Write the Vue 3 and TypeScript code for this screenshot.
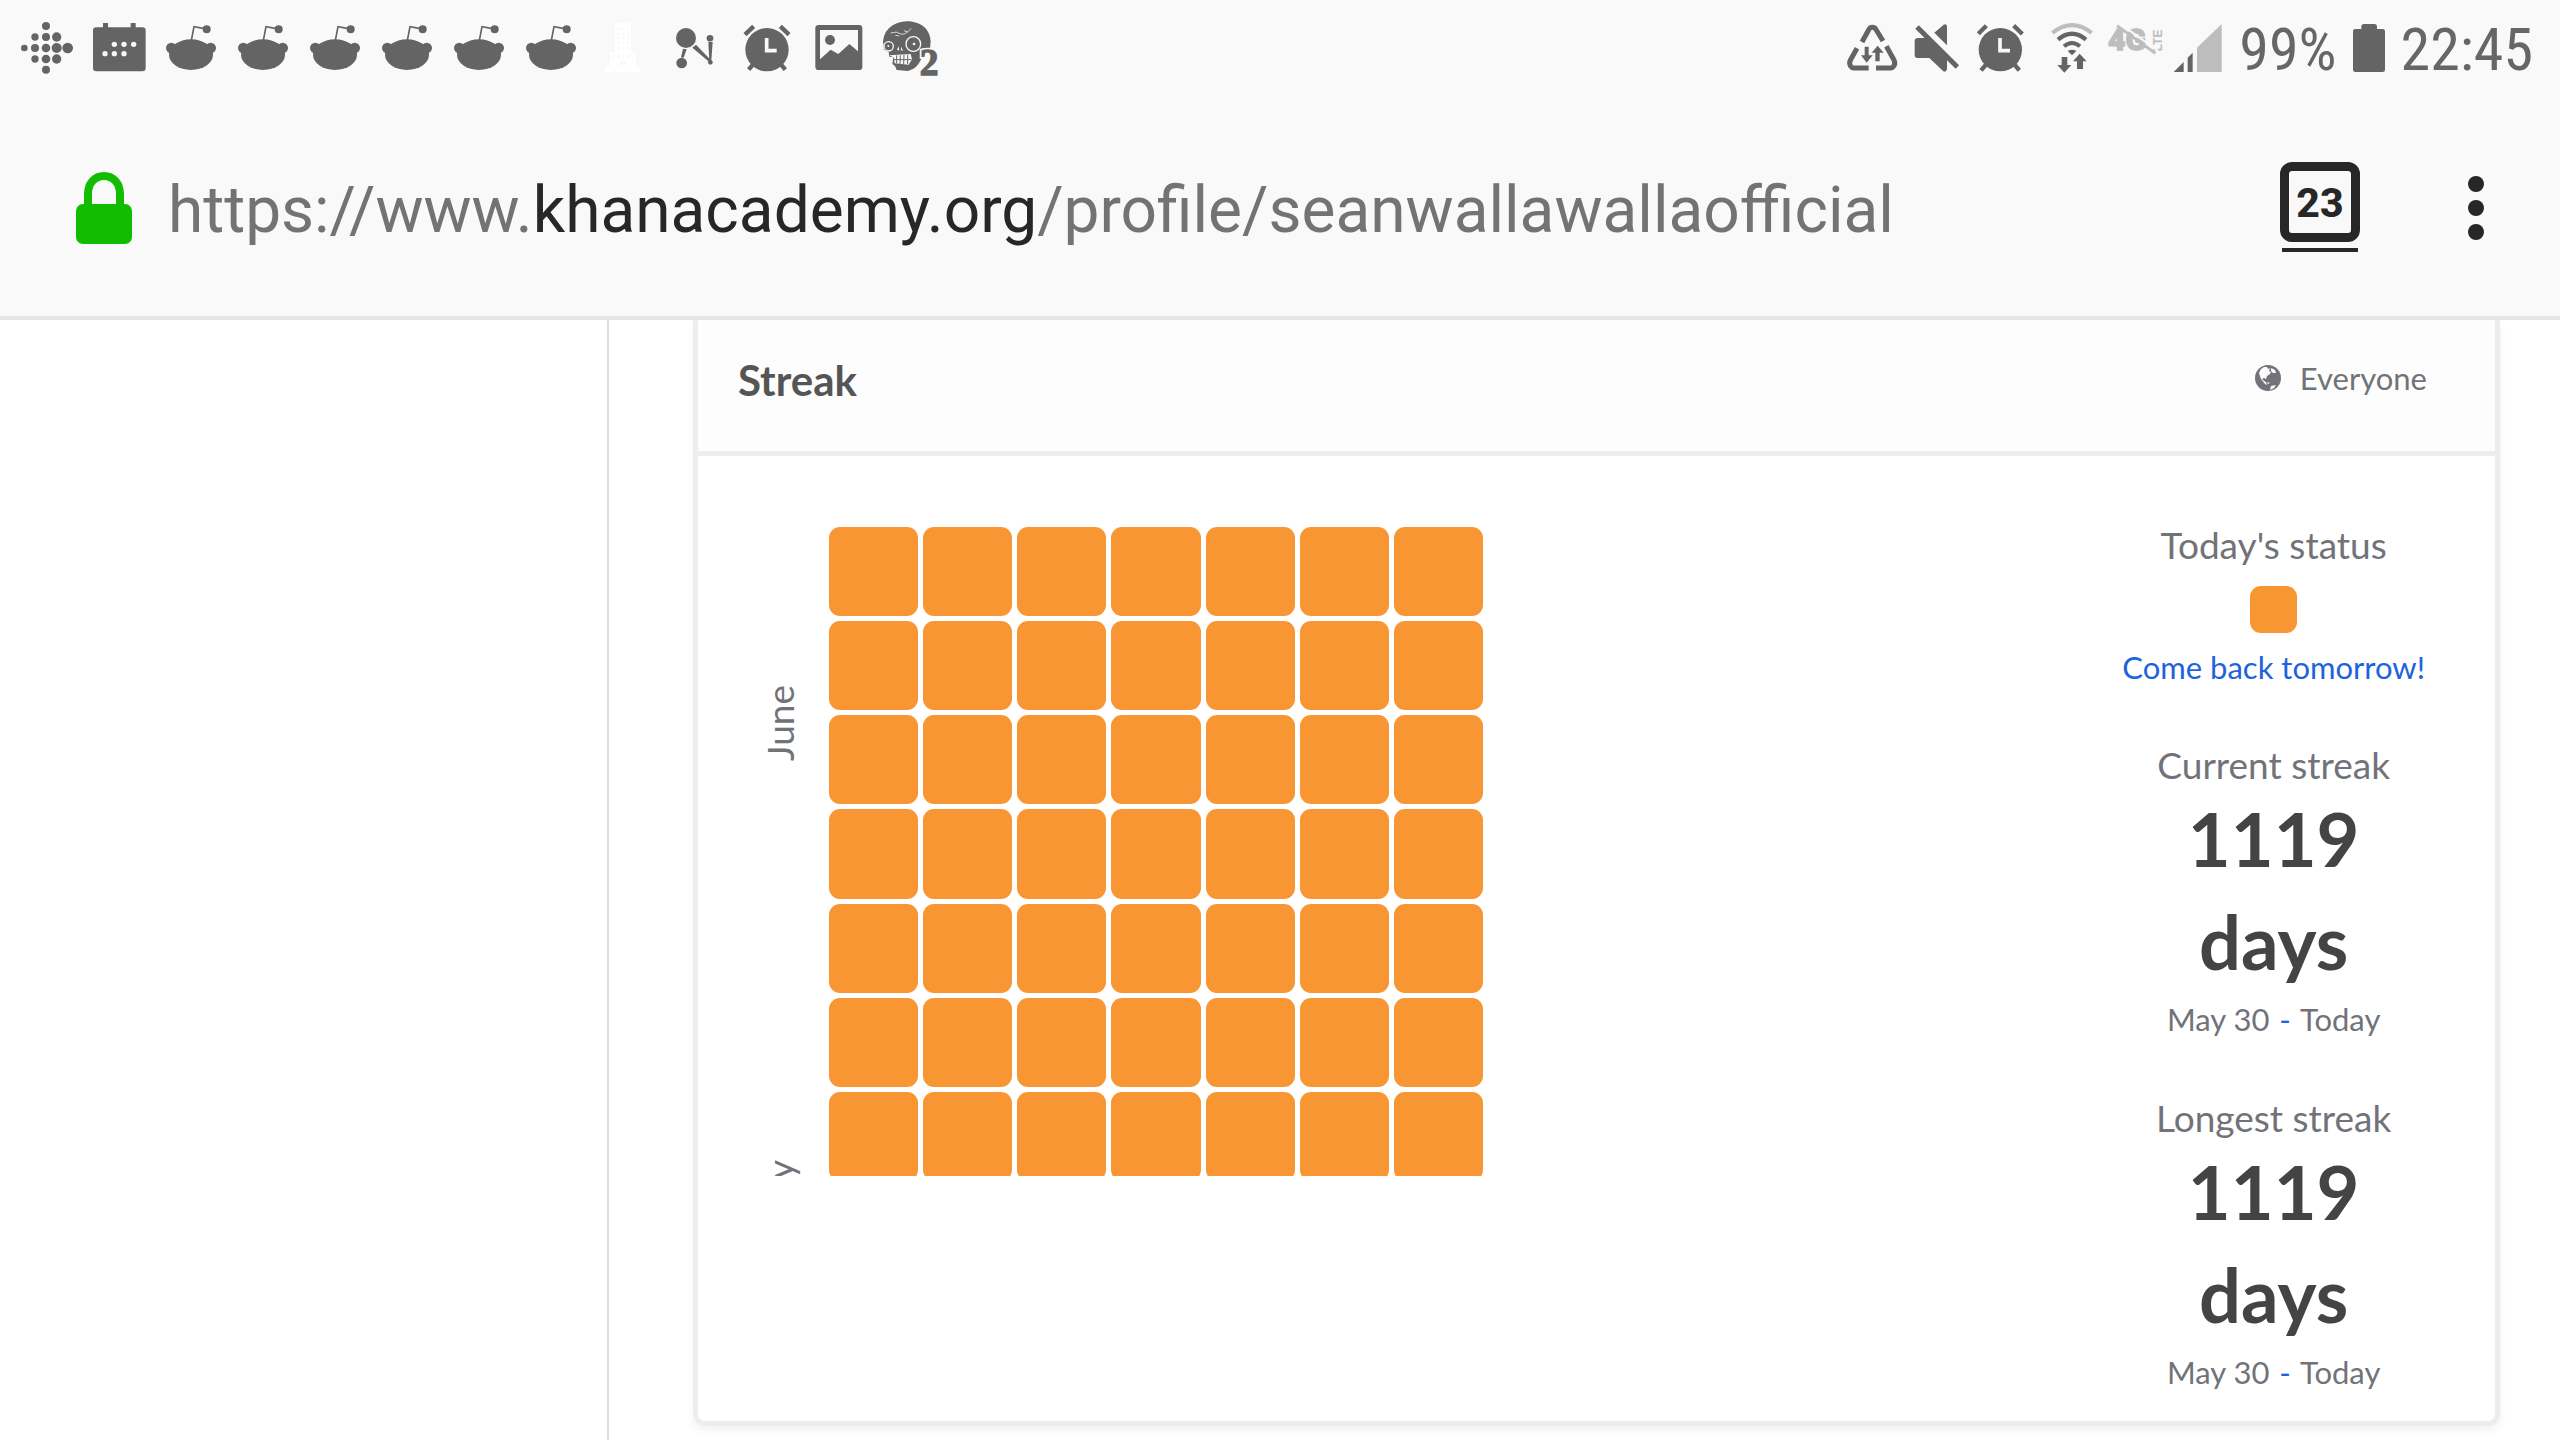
<script setup lang="ts">
interface Streak {
  label: string
  count: number
  from: string
  to: string
}

const redditNotifications = 6
const weeks = 7
const daysPerWeek = 7

const months = [
  { name: 'June', size: 'short' },
  { name: 'May', size: 'long' },
]

const streaks: Streak[] = [
  { label: 'Current streak', count: 1119, from: 'May 30', to: 'Today' },
  { label: 'Longest streak', count: 1119, from: 'May 30', to: 'Today' },
]

const fitbitDots = [
  [73, 144, 10], [105, 111, 11], [105, 144, 12], [105, 177, 11],
  [138, 78, 12], [138, 111, 12], [138, 144, 13], [138, 177, 13], [138, 209, 12],
  [170, 111, 14], [170, 144, 15], [170, 177, 14], [203, 144, 16],
]
const calendarDots = [[343, 133], [372, 133], [401, 133], [315, 161], [343, 161], [372, 161]]
</script>

<template>
  <div class="screen">
    <header class="chrome">
      <div class="status-bar">
        <div class="notifications">
          <svg class="note" viewBox="33 0 216 300">
            <circle v-for="(d, i) in fitbitDots" :key="i" :cx="d[0]" :cy="d[1]" :r="d[2]" />
          </svg>
          <svg class="note" viewBox="249 0 216 300">
            <rect x="279" y="82" width="158" height="132" rx="10" />
            <rect x="309" y="69" width="15" height="16" />
            <rect x="392" y="69" width="15" height="16" />
            <circle v-for="(d, i) in calendarDots" :key="i" class="paper" :cx="d[0]" :cy="d[1]" r="8" />
          </svg>
          <svg v-for="n in redditNotifications" :key="n" class="note" viewBox="465 0 216 300">
            <ellipse cx="573" cy="164" rx="66" ry="46" />
            <circle cx="514" cy="144" r="16" />
            <circle cx="632" cy="144" r="16" />
            <path class="line" d="M574 122 L582 80 L614 86" stroke-width="5" />
            <circle cx="620" cy="88" r="12" />
          </svg>
          <svg class="note" viewBox="321 0 216 300">
            <path fill="#fff" d="M404 70H453V155H468V197H481V217H376V197H390V155H404Z" />
            <path
              class="paper"
              d="M411 84h7v7h-7zM426 84h7v7h-7zM441 84h6v7h-6zM411 98h7v7h-7zM426 98h7v7h-7zM441 98h6v7h-6zM411 112h7v7h-7zM426 112h7v7h-7zM441 112h6v7h-6zM411 126h7v7h-7zM426 126h7v7h-7zM441 126h6v7h-6zM411 140h7v7h-7zM426 140h7v7h-7zM441 140h6v7h-6zM397 163h7v11h-7zM411 163h7v11h-7zM426 163h7v11h-7zM441 163h6v11h-6zM454 163h6v11h-6zM419 183h20v12h-20z"
            />
          </svg>
          <svg class="note" viewBox="537 0 216 300">
            <circle cx="618" cy="114" r="30" />
            <circle cx="690" cy="115" r="10" />
            <circle cx="605" cy="189" r="16" />
            <circle cx="691" cy="187" r="7" />
            <path d="M609 146L620 148L611 173L603 172ZM637 143L648 134L693 181L688 186ZM685 126L698 126L694 182L688 182Z" />
          </svg>
          <svg class="note" viewBox="425 0 216 300">
            <circle cx="533" cy="149" r="65" />
            <path class="line" d="M467 104L493 79M573 79L599 104" stroke-width="13" />
            <path class="line" d="M478 209L494 190M588 209L572 190" stroke-width="13" />
            <path class="hand" d="M532 114V152H562" />
          </svg>
          <svg class="note" viewBox="969 0 216 300">
            <rect x="1006" y="75" width="141" height="135" rx="10" />
            <path class="paper" d="M1020 90H1134V154L1108 132L1075 162L1052 149L1020 178Z" />
            <circle cx="1050" cy="120" r="15" />
          </svg>
          <svg class="note" viewBox="1185 0 216 300">
            <path d="M1209 124Q1212 92 1238 76Q1262 62 1290 64Q1348 72 1352 124L1350 146Q1328 152 1324 176Q1312 206 1284 213L1250 210L1245 198L1237 192L1240 172L1228 170L1226 156L1212 150Z" />
            <path d="M1232 99Q1250 92 1262 102Q1276 106 1294 85M1246 106L1258 108M1272 92L1284 96" fill="none" stroke="#d5d5d5" stroke-width="3" />
            <g fill="#646464" stroke="#f9f9f9" stroke-width="4">
              <circle cx="1226" cy="139" r="14" />
              <circle cx="1300" cy="132" r="22" />
            </g>
            <circle cx="1225" cy="138" r="3" class="paper" />
            <circle cx="1302" cy="132" r="4" class="paper" />
            <path class="paper" d="M1251 150L1256 139L1258 151ZM1263 140L1269 152L1263 151ZM1228 166L1292 162L1296 178L1286 194L1244 190L1242 173Z" />
            <path class="line" d="M1250 166V190M1261 166L1260 192M1272 165L1271 193M1283 164V192M1242 179H1294" stroke-width="3" />
            <text class="badge-halo" x="1319" y="224">2</text>
            <text class="badge" x="1319" y="224">2</text>
          </svg>
        </div>

        <div class="indicators">
          <svg class="recycle" viewBox="49 0 198 300">
            <path class="line" stroke-width="15" d="M118 126L139 88Q142 82 149 82Q156 82 159 87L181 123M103 145L83 181Q78 190 84 199Q87 204 93 204H138M191 139L214 180Q219 190 213 199Q210 204 204 204H160" />
            <path d="M126 140H138V166H150L132 188L115 166H126ZM158 184H171V158H183L165 137L147 158H158Z" />
          </svg>
          <svg class="mute" viewBox="247 0 189 300">
            <path d="M276 124Q276 114 286 114H308L373 178V208Q370 218 362 214L320 174H286Q276 174 276 164ZM335 98L363 74Q373 70 373 82V136Z" />
            <path class="line" stroke-width="15" d="M283 81L404 201" />
          </svg>
          <svg class="alarm" viewBox="436 0 198 300">
            <circle cx="533" cy="149" r="65" />
            <path class="line" d="M467 101L491 77M573 77L599 102" stroke-width="13" />
            <path class="line" d="M475 211L492 192M590 211L574 192" stroke-width="13" />
            <path class="hand" d="M532 114V152H562" />
          </svg>
          <svg class="wifi" viewBox="634 0 204 300">
            <path class="line faint" stroke-width="12" d="M689 99Q748 52 807 99" />
            <path class="line" stroke-width="13" d="M706 119Q748 84 790 119" />
            <path class="line" stroke-width="12" d="M724 139Q748 119 772 139" />
            <path d="M735 153Q748 145 761 153L748 166Z" />
            <path d="M717 171H734V195H746L725 218L704 195H717ZM763 207H781V184H792L771 161L751 184H763Z" />
          </svg>
          <svg class="lte" viewBox="838 0 198 300">
            <text class="four-g" x="856" y="151">4G</text>
            <text class="lte-text" transform="translate(1017 154) rotate(-90)">LTE</text>
            <path d="M890 70L1006 152" fill="none" stroke="#f9f9f9" stroke-width="6" />
            <path class="line faint" d="M883 77L998 160" stroke-width="8" />
          </svg>
          <svg class="signal" viewBox="1036 0 162 300">
            <path d="M1053 216L1083 186V216ZM1095 173L1110 158V216H1095Z" />
            <path class="faint-fill" d="M1123 143L1197 72V216H1123Z" />
          </svg>
          <span class="percent">99%</span>
          <svg class="battery" viewBox="573 0 96 300">
            <path d="M598 87V80Q598 72 606 72H637Q645 72 645 80V87H662Q669 87 669 94V209Q669 216 662 216H580Q573 216 573 209V94Q573 87 580 87Z" />
          </svg>
          <time class="clock">22:45</time>
        </div>
      </div>

      <div class="toolbar">
        <svg class="lock" viewBox="0 0 56 72">
          <path d="M12 36V22C12 11 19 4 28 4S44 11 44 22V36" fill="none" stroke="#12bc00" stroke-width="8" />
          <rect y="32" width="56" height="40" rx="7" fill="#12bc00" />
        </svg>
        <button class="url" type="button" aria-label="Edit address">https://www.<span class="domain">khanacademy.org</span>/profile/seanwallawallaofficial</button>
        <button class="tabs" type="button" aria-label="Open tabs"><span class="tab-count">23</span></button>
        <button class="menu" type="button" aria-label="Menu"><i></i><i></i><i></i></button>
      </div>
    </header>

    <div class="page">
      <aside class="sidebar"></aside>
      <main class="content">
        <section class="card">
          <div class="card-head">
            <h2>Streak</h2>
            <div class="visibility">
              <svg class="globe" viewBox="0 0 27 27">
                <circle cx="13" cy="13" r="13" fill="#717379" />
                <path fill="#fdfdfd" d="M4 8L6 4L9 2L12 2L13 4L15 3L14 6L16 7L15 9L12 11L11 14L9 13L7 14L9 16L11 17L12 20L10 19L6 14ZM16 3L20 5L21 8L18 8L16 6ZM12 17L15 18L13 19ZM16 21L21 20L19 23L15 25Z" />
              </svg>
              <span>Everyone</span>
            </div>
          </div>
          <div class="card-body">
            <div class="calendar">
              <div class="months">
                <div v-for="m in months" :key="m.name" class="month" :class="m.size">
                  <span>{{ m.name }}</span>
                </div>
              </div>
              <div class="days">
                <span v-for="d in weeks * daysPerWeek" :key="d" class="day"></span>
              </div>
            </div>
            <div class="stats">
              <div class="stat today">
                <div class="label">Today's status</div>
                <span class="swatch"></span>
                <a class="hint" href="#">Come back tomorrow!</a>
              </div>
              <div v-for="s in streaks" :key="s.label" class="stat">
                <div class="label">{{ s.label }}</div>
                <div class="count"><span>{{ s.count }}</span><span>days</span></div>
                <div class="range">{{ s.from }} <span class="dash">-</span> {{ s.to }}</div>
              </div>
            </div>
          </div>
        </section>
      </main>
    </div>
  </div>
</template>

<style>
body {
  margin: 0;
  background: #fff;
}
</style>

<style scoped>
.screen {
  display: flex;
  flex-direction: column;
  min-height: 100vh;
  font-family: Lato, sans-serif;
}
.chrome {
  background: #f9f9f9;
  border-bottom: 4px solid #e6e6e6;
  font-family: Roboto, sans-serif;
}
.status-bar {
  display: flex;
  justify-content: space-between;
  height: 100px;
  padding: 0 27px 0 11px;
  color: #666;
  fill: #646464;
}
.notifications,
.indicators {
  display: flex;
  align-items: flex-start;
}
.status-bar svg {
  display: block;
  height: 100px;
}
.note { width: 72px; }
.recycle, .alarm, .lte { width: 66px; }
.mute { width: 63px; }
.wifi { width: 68px; }
.signal { width: 54px; }
.battery { width: 32px; margin: 0 16px; }
.paper { fill: #f9f9f9; }
.line {
  fill: none;
  stroke: #646464;
}
.hand {
  fill: none;
  stroke: #f9f9f9;
  stroke-width: 11px;
}
.faint { stroke: #bdbdbd; }
.faint-fill { fill: #bdbdbd; }
.badge,
.badge-halo {
  font: bold 112px "Liberation Serif", serif;
  stroke: #646464;
  stroke-width: 4px;
}
.badge-halo {
  stroke: #f9f9f9;
  stroke-width: 14px;
}
.four-g {
  font: 900 90px Roboto, sans-serif;
  fill: #bdbdbd;
  stroke: #bdbdbd;
  stroke-width: 4px;
}
.lte-text {
  font: bold 36px "Liberation Sans", sans-serif;
  fill: #bdbdbd;
}
.percent,
.clock {
  font-family: "Roboto Condensed", Roboto, sans-serif;
  font-size: 60px;
  line-height: 100px;
}
.percent { margin-left: 17px; }

.toolbar {
  display: flex;
  align-items: flex-start;
  height: 216px;
  padding: 0 76px;
}
.toolbar button {
  padding: 0;
  border: 0;
  background: none;
  font-family: inherit;
}
.lock {
  width: 56px;
  height: 72px;
  margin-top: 72px;
}
.toolbar .url {
  flex: 1;
  margin: 72px 0 0 36px;
  text-align: left;
  font-size: 64px;
  line-height: 78px;
  white-space: nowrap;
  color: #737373;
}
.domain { color: #272727; }
.toolbar .tabs {
  width: 80px;
  margin-top: 62px;
  color: #272727;
}
.tab-count {
  display: block;
  padding-top: 2px;
  border: 9px solid #272727;
  border-radius: 12px;
  font-size: 41px;
  font-weight: 800;
  line-height: 60px;
}
.tabs::after {
  content: "";
  display: block;
  height: 4px;
  margin: 6px 2px 0;
  background: #272727;
}
.toolbar .menu {
  display: grid;
  gap: 8px;
  margin: 76px 0 0 108px;
}
.menu i {
  width: 16px;
  height: 16px;
  border-radius: 50%;
  background: #272727;
}

.page {
  display: flex;
  flex: 1;
}
.sidebar {
  flex: 0 0 607px;
  border-right: 2px solid #dcdcdc;
}
.content {
  flex: 1;
  padding: 0 60px 14px 84px;
}
.card {
  border: 5px solid #ededed;
  border-top: 0;
  border-radius: 0 0 12px 12px;
  box-shadow: 0 5px 8px rgba(0, 0, 0, 0.05);
}
.card-head {
  display: flex;
  justify-content: space-between;
  height: 96px;
  padding: 35px 68px 0 40px;
  border-bottom: 5px solid #ededed;
  background: #fdfdfd;
}
h2 {
  margin: 0;
  font-size: 42px;
  line-height: 50px;
  color: #555;
}
.visibility {
  display: flex;
  gap: 18px;
  font-size: 31px;
  line-height: 46px;
  color: #717379;
}
.globe {
  width: 27px;
  height: 27px;
  margin-top: 10px;
}
.card-body {
  display: flex;
  justify-content: space-between;
  padding: 67px 70px 23px 60px;
}
.calendar {
  display: flex;
  height: 649px;
  margin-top: 4px;
  overflow: hidden;
}
.months {
  width: 71px;
  font-size: 37px;
  line-height: 44px;
  color: #717379;
}
.month {
  display: flex;
  align-items: center;
}
.month span {
  writing-mode: vertical-rl;
  transform: rotate(180deg);
}
.short { height: 392px; }
.long { height: 552px; }
.days {
  display: grid;
  grid-template: repeat(7, 1fr) / repeat(7, 1fr);
  gap: 5px;
  width: 654px;
  height: 654px;
}
.day,
.swatch {
  border-radius: 11px;
  background: #f79633;
}
.stats {
  text-align: center;
  color: #717379;
}
.stat { margin-bottom: 51px; }
.stat:last-child { margin-bottom: 0; }
.today { margin-bottom: 55px; }
.label {
  font-size: 37px;
  line-height: 44px;
}
.swatch {
  display: block;
  width: 47px;
  height: 47px;
  margin: 19px auto 13px;
}
.hint {
  display: block;
  font-size: 31px;
  line-height: 42px;
  color: #1e63dd;
  text-decoration: none;
}
.count {
  font-size: 74px;
  font-weight: 700;
  line-height: 103px;
  color: #444;
}
.count span { display: block; }
.range {
  font-size: 31px;
  line-height: 52px;
}
.dash {
  margin: 0 2px;
  color: #1e63dd;
}
</style>
